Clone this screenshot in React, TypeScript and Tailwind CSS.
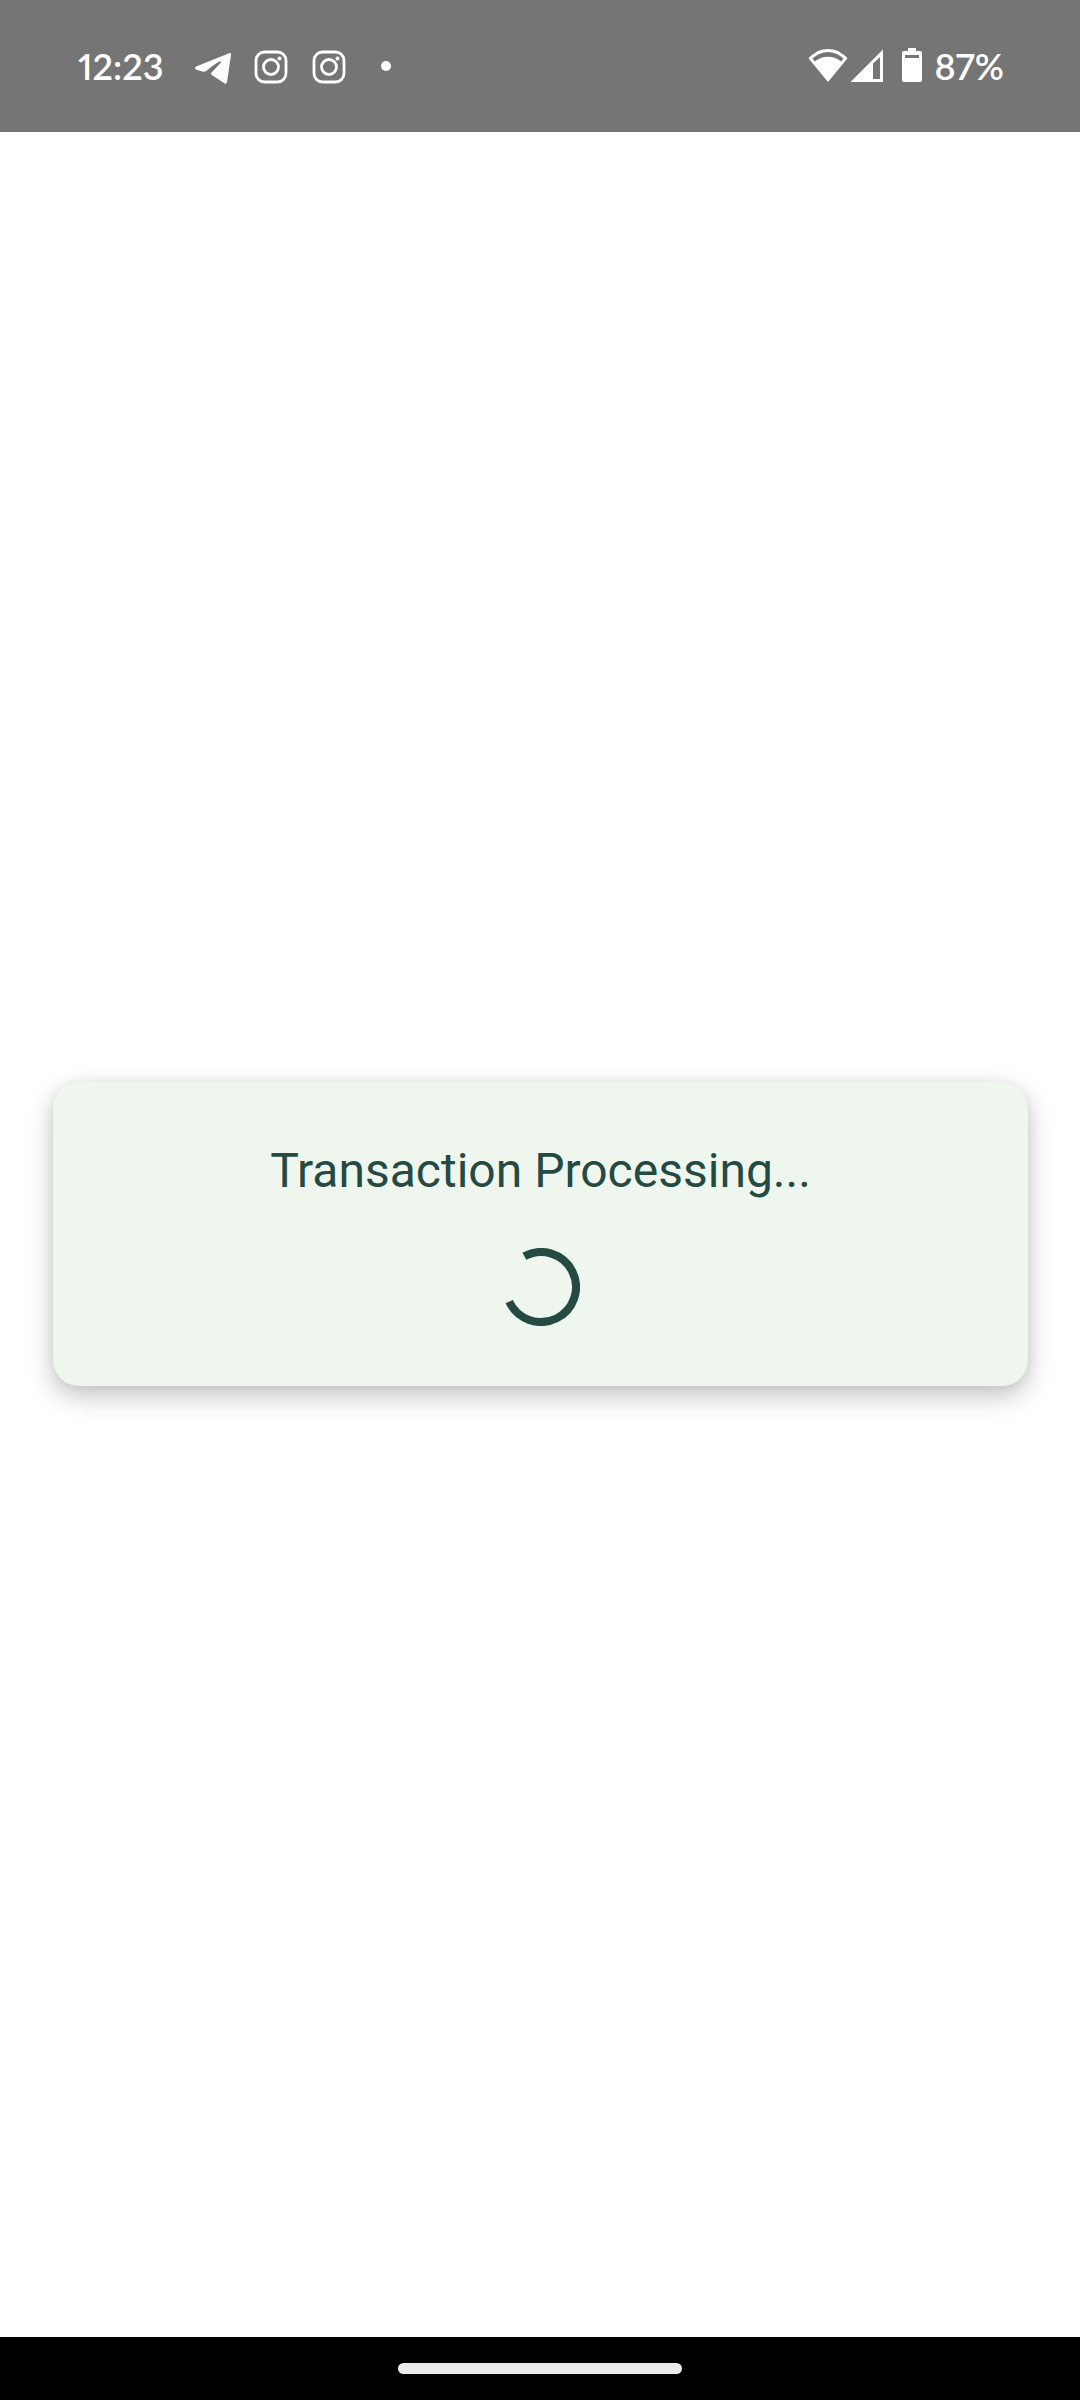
function TelegramIcon() {
  return (
    <svg className="h-9 w-9" viewBox="0 0 36 36" fill="currentColor" aria-hidden="true">
      <path d="M1.200 18.600 34 5.200c1.500-.5 2.300.2 2 1.700l-4 27c-.3 1.900-1.600 2.300-3 1.200L16.900 26.900c-1-.8-1.100-1.500-.4-2.500L26 14.600c.7-1.200-.2-1.700-1.300-1.200-4.500 2-8 5-12.200 8.700-1.600 1.500-3 2-5 1.500l-6-1.800c-1.900-.7-1.900-2.500-.3-3.200Z" />
    </svg>
  );
}

function InstagramIcon() {
  return (
    <svg className="h-9 w-9" viewBox="0 0 36 36" fill="none" stroke="currentColor" aria-hidden="true">
      <rect x="3" y="4" width="30" height="30" rx="8.500" strokeWidth="2.800" />
      <circle cx="18" cy="19" r="7.500" strokeWidth="2.800" />
      <circle cx="26.500" cy="10.500" r="2" fill="currentColor" stroke="none" />
    </svg>
  );
}

function WifiIcon() {
  return (
    <svg className="h-9 w-10" viewBox="0 0 40 36" aria-hidden="true">
      <path d="M.500 10.300C12-2.100 28-2.100 39.500 10.300L20 34Z" fill="currentColor" />
      <path d="M4.500 10.600C13.500 1.900 26.500 1.900 35.500 10.600L33.300 13.600C25.500 7.200 14.500 7.200 6.700 13.600Z" fill="#757575" />
    </svg>
  );
}

function SignalIcon() {
  return (
    <svg className="h-9 w-[34px]" viewBox="0 0 34 36" aria-hidden="true">
      <path d="M33 1.500V34H.5Z" fill="currentColor" />
      <path d="M23 15.500 30 9V31H23Z" fill="#757575" />
    </svg>
  );
}

function BatteryIcon() {
  return (
    <svg className="h-9 w-5" viewBox="0 0 20 36" aria-hidden="true">
      <path
        d="M6 0h8v3h4a2 2 0 0 1 2 2v27a2 2 0 0 1-2 2H2a2 2 0 0 1-2-2V5a2 2 0 0 1 2-2h4Z"
        fill="currentColor"
      />
      <path d="M3 7h14v3H3Z" fill="#757575" />
    </svg>
  );
}

function StatusBar() {
  return (
    <header className="flex h-[132px] items-center justify-between bg-[#757575] pr-[76px] pl-[78px] font-['Lato',sans-serif] text-[36px] leading-[44px] font-semibold text-white proportional-nums">
      <div className="flex items-center">
        <time className="w-[117px]">12:23</time>
        <div className="flex items-center gap-[22px]">
          <TelegramIcon />
          <InstagramIcon />
          <InstagramIcon />
          <span className="ml-3 size-[10px] rounded-full bg-white" />
        </div>
      </div>
      <div className="flex items-center">
        <WifiIcon />
        <span className="ml-[2px] flex">
          <SignalIcon />
        </span>
        <span className="mr-3 ml-[18px] flex">
          <BatteryIcon />
        </span>
        <span>87%</span>
      </div>
    </header>
  );
}

function Spinner() {
  return (
    <svg className="size-[78px] text-[#244a43]" viewBox="0 0 78 78" fill="none" role="img" aria-label="Loading">
      <path d="M22.400 8.200A35 35 0 1 1 7.200 53.600" stroke="currentColor" strokeWidth="8" />
    </svg>
  );
}

export default function App() {
  return (
    <div className="flex min-h-screen flex-col bg-white">
      <StatusBar />
      <main className="flex flex-1 items-center pr-[52px] pb-px pl-[53px]">
        <section
          role="status"
          className="flex w-full flex-col items-center gap-[49px] rounded-[26px] bg-[#eef6ed] pt-[61px] pb-[60px] shadow-[0_10px_26px_rgba(0,0,0,0.24),0_0_10px_rgba(0,0,0,0.06)]"
        >
          <p className="font-['Roboto',sans-serif] text-[48px] leading-[56px] text-[#244a43]">
            Transaction Processing...
          </p>
          <Spinner />
        </section>
      </main>
      <footer className="flex h-[63px] items-center justify-center bg-black">
        <div className="h-[11px] w-[284px] rounded-full bg-[#ebebeb]" />
      </footer>
    </div>
  );
}
